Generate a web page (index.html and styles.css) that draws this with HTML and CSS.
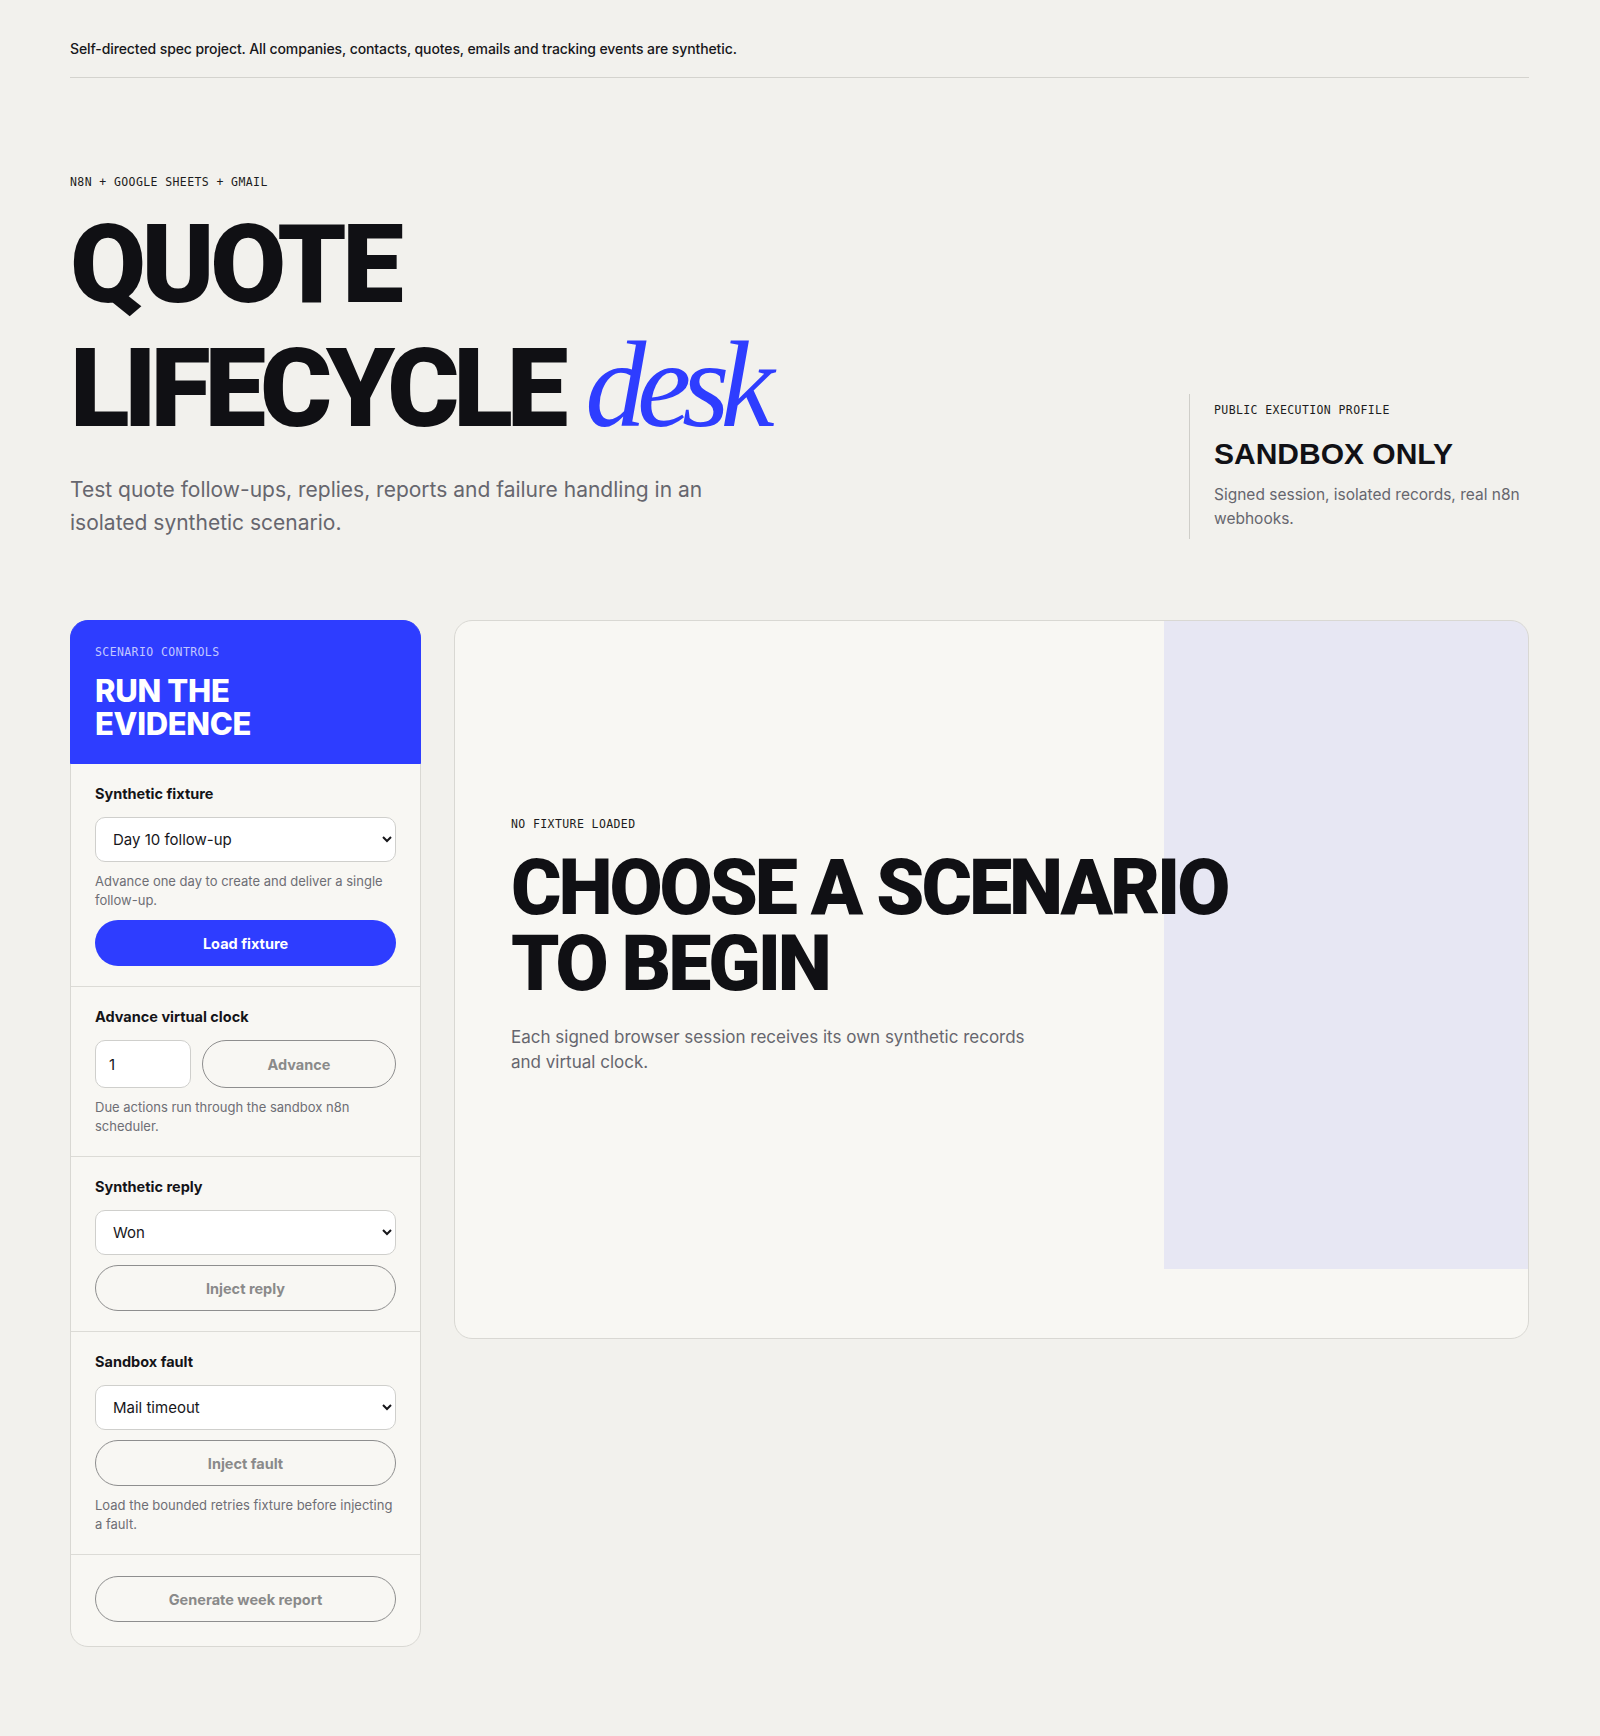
FILE: index.html
```html
<!DOCTYPE html>
<html lang="en">
<head>
<meta charset="utf-8">
<title>Quote Lifecycle Desk</title>
<link rel="stylesheet" href="styles.css">
</head>
<body>
<div class="page">
  <header class="topbar">
    <p class="disclaimer">Self-directed spec project. All companies, contacts, quotes, emails and tracking events are synthetic.</p>
  </header>

  <section class="hero">
    <div class="hero-main">
      <p class="eyebrow">N8N + GOOGLE SHEETS + GMAIL</p>
      <h1 class="hero-title">QUOTE<br><span class="title-tight">LIFECYCLE</span> <span class="accent">desk</span></h1>
      <p class="hero-lede">Test quote follow-ups, replies, reports and failure handling in an isolated synthetic scenario.</p>
    </div>
    <aside class="profile">
      <p class="eyebrow">PUBLIC EXECUTION PROFILE</p>
      <h2 class="profile-title">SANDBOX ONLY</h2>
      <p class="profile-text">Signed session, isolated records, real n8n webhooks.</p>
    </aside>
  </section>

  <main class="workspace">
    <section class="controls">
      <div class="controls-head">
        <p class="eyebrow eyebrow-light">SCENARIO CONTROLS</p>
        <h2 class="controls-title">RUN THE<br>EVIDENCE</h2>
      </div>

      <div class="control-group">
        <label class="control-label" for="fixture">Synthetic fixture</label>
        <select id="fixture" class="field">
          <option>Day 10 follow-up</option>
        </select>
        <p class="hint">Advance one day to create and deliver a single follow-up.</p>
        <button class="btn btn-primary" type="button">Load fixture</button>
      </div>

      <div class="control-group">
        <label class="control-label" for="days">Advance virtual clock</label>
        <div class="clock-row">
          <input id="days" class="field field-number" type="text" value="1">
          <button class="btn btn-ghost btn-grow" type="button">Advance</button>
        </div>
        <p class="hint">Due actions run through the sandbox n8n scheduler.</p>
      </div>

      <div class="control-group">
        <label class="control-label" for="reply">Synthetic reply</label>
        <select id="reply" class="field">
          <option>Won</option>
        </select>
        <button class="btn btn-ghost" type="button">Inject reply</button>
      </div>

      <div class="control-group">
        <label class="control-label" for="fault">Sandbox fault</label>
        <select id="fault" class="field">
          <option>Mail timeout</option>
        </select>
        <button class="btn btn-ghost" type="button">Inject fault</button>
        <p class="hint">Load the bounded retries fixture before injecting a fault.</p>
      </div>

      <div class="control-group control-group-last">
        <button class="btn btn-ghost" type="button">Generate week report</button>
      </div>
    </section>

    <section class="stage-panel">
      <div class="stage">
        <p class="eyebrow">NO FIXTURE LOADED</p>
        <h2 class="stage-title">CHOOSE A SCENARIO<br>TO BEGIN</h2>
        <p class="stage-text">Each signed browser session receives its own synthetic records and virtual clock.</p>
      </div>
    </section>
  </main>
</div>
</body>
</html>
```

FILE: styles.css
```css
* {
  box-sizing: border-box;
}

html,
body {
  margin: 0;
  padding: 0;
}

body {
  background: #f2f1ed;
  color: #111116;
  font-family: Inter, Roboto, "Liberation Sans", Arial, sans-serif;
}

.page {
  padding: 0 71px 88px 70px;
}

/* top bar */
.topbar {
  padding: 39px 0 18px;
  border-bottom: 1px solid #d4d3ce;
}

.disclaimer {
  margin: 0;
  font-size: 14px;
  line-height: 20px;
  font-weight: 500;
  letter-spacing: -0.1px;
  color: #17171b;
}

/* shared eyebrow */
.eyebrow {
  margin: 0;
  font-family: "DejaVu Sans Mono", "Liberation Mono", monospace;
  font-size: 11.5px;
  line-height: 16px;
  letter-spacing: 0.4px;
  color: #1c1c20;
}

.eyebrow-light {
  color: #c3c8ff;
}

/* hero */
.hero {
  display: flex;
  justify-content: space-between;
  align-items: flex-end;
  padding-top: 96px;
}

.hero-title {
  margin: 13px 0 0;
  font-family: Roboto, "Liberation Sans", sans-serif;
  font-weight: 900;
  font-size: 110px;
  line-height: 124px;
  letter-spacing: -0.04em;
  color: #101014;
}

.title-tight {
  letter-spacing: -0.056em;
}

.accent {
  font-family: "Liberation Serif", "DejaVu Serif", serif;
  font-style: italic;
  font-weight: 400;
  font-size: 122px;
  line-height: 0;
  letter-spacing: -0.075em;
  color: #2e3dff;
}

.hero-lede {
  margin: 22px 0 0;
  max-width: 660px;
  font-size: 21px;
  line-height: 33px;
  color: #66666e;
}

.profile {
  width: 340px;
  flex: none;
  border-left: 1px solid #cfcec9;
  padding: 8px 0 8px 24px;
}

.profile-title {
  margin: 18px 0 0;
  font-family: "Liberation Sans", Arial, sans-serif;
  font-weight: 700;
  font-size: 30px;
  line-height: 35px;
  color: #111116;
}

.profile-text {
  margin: 12px 0 0;
  font-size: 15.5px;
  line-height: 24px;
  color: #66666e;
}

/* workspace */
.workspace {
  display: grid;
  grid-template-columns: 351px 1fr;
  gap: 33px;
  align-items: start;
  margin-top: 81px;
}

.controls {
  background: #f8f7f3;
  border: 1px solid #d9d8d3;
  border-radius: 18px;
}

.controls-head {
  margin: -1px -1px 0;
  background: #2e3dff;
  border: 1px solid #2e3dff;
  border-radius: 18px 18px 0 0;
  padding: 23px 24px 23px;
}

.controls-title {
  margin: 14px 0 0;
  font-family: Inter, Roboto, sans-serif;
  font-weight: 800;
  font-size: 31px;
  line-height: 33px;
  letter-spacing: -0.01em;
  color: #ffffff;
}

.control-group {
  display: flex;
  flex-direction: column;
  gap: 10px;
  padding: 21px 24px 20px;
  border-top: 1px solid #dcdbd6;
}

.controls-head + .control-group {
  border-top: 0;
}

.control-group-last {
  padding-bottom: 24px;
}

.control-label {
  margin-bottom: 4px;
  font-size: 14.5px;
  line-height: 18px;
  font-weight: 700;
  color: #141418;
}

.field {
  height: 45px;
  border: 1px solid #cfcfcc;
  border-radius: 10px;
  background: #ffffff;
  font-family: Inter, Roboto, sans-serif;
  font-size: 15px;
  color: #16161a;
  padding: 0 8px 0 13px;
}

.field-number {
  width: 96px;
  height: 48px;
  padding: 0 12px 0 13px;
  flex: none;
}

.hint {
  margin: 0;
  font-size: 13px;
  line-height: 19px;
  color: #6e6e75;
}

.clock-row {
  display: flex;
  gap: 11px;
}

.btn {
  height: 46px;
  border-radius: 999px;
  font-family: Inter, Roboto, sans-serif;
  font-weight: 700;
  font-size: 14.5px;
  cursor: pointer;
}

.btn-primary {
  background: #2e3dff;
  color: #ffffff;
  border: 0;
}

.btn-ghost {
  background: transparent;
  border: 1px solid #8e8e8e;
  color: #8a8a8a;
}

.btn-grow {
  flex: 1;
  height: 48px;
}

/* stage */
.stage-panel {
  border: 1px solid #d9d8d3;
  border-radius: 18px;
  background: linear-gradient(#e7e7f3, #e7e7f3) right top / 364px calc(100% - 69px) no-repeat, #f8f7f3;
  padding-bottom: 69px;
}

.stage {
  min-height: 648px;
  display: flex;
  flex-direction: column;
  justify-content: center;
  padding: 0 56px;
}

.stage-title {
  margin: 18px 0 0;
  font-family: Roboto, "Liberation Sans", sans-serif;
  font-weight: 900;
  font-size: 77px;
  line-height: 76px;
  letter-spacing: -0.04em;
  color: #101014;
}

.stage-text {
  margin: 23px 0 0;
  max-width: 530px;
  font-size: 17px;
  line-height: 25px;
  color: #66666e;
}
```
